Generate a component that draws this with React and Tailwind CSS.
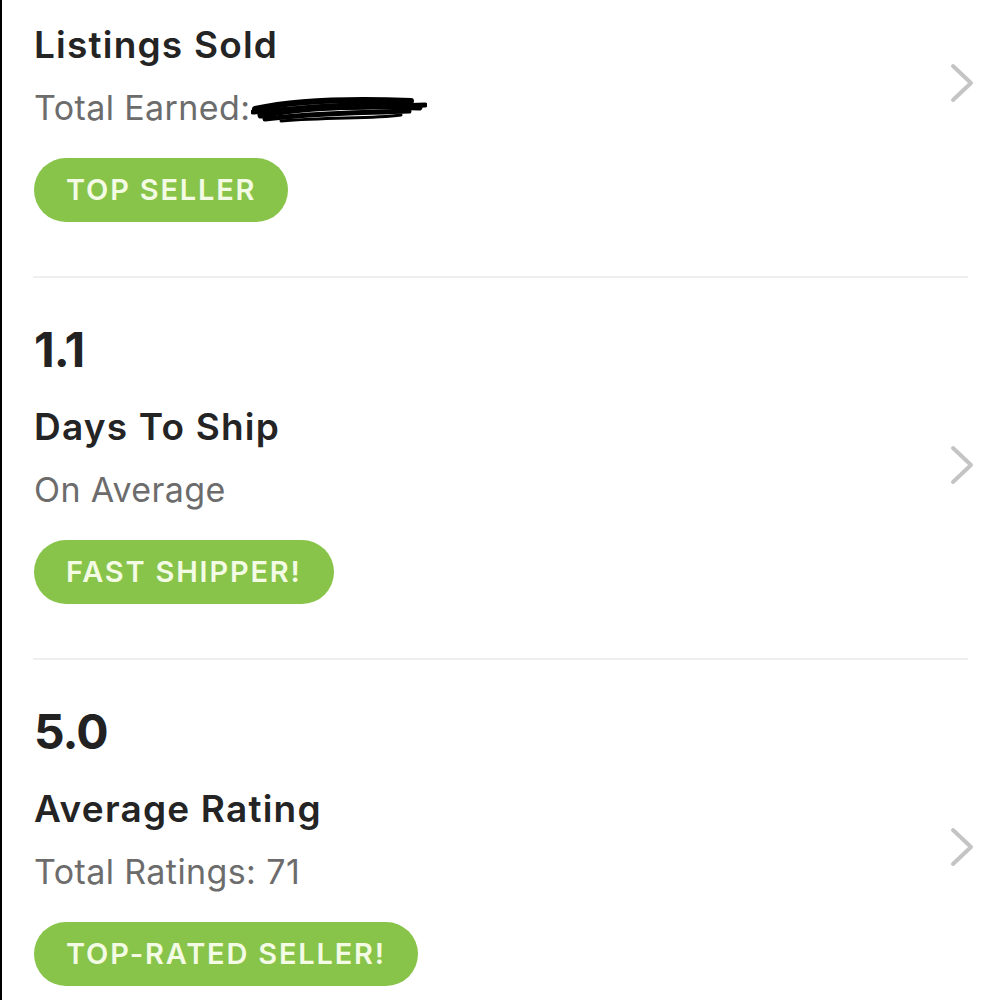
import { useState } from 'react'

const font = { fontFamily: 'Inter, Lato, sans-serif' }

function Chevron() {
  return (
    <svg width="26" height="40" viewBox="0 0 26 40" fill="none" className="shrink-0">
      <polyline points="4,3 22,20 4,37" stroke="#c4c4c4" strokeWidth="4" strokeLinecap="round" strokeLinejoin="round" />
    </svg>
  )
}

function Redacted() {
  return (
    <svg width="176" height="36" viewBox="0 0 176 36" className="ml-[1px] -mb-[4px]">
      <path d="M6 20 C40 10, 90 8, 150 9" stroke="#999" strokeWidth="3" fill="none" />
      <path d="M4 16 C50 6, 110 6, 160 8" stroke="#000" strokeWidth="6" fill="none" strokeLinecap="round" />
      <path d="M10 22 C60 12, 120 12, 168 14" stroke="#000" strokeWidth="7" fill="none" strokeLinecap="round" />
      <path d="M2 19 C40 14, 100 15, 174 12" stroke="#000" strokeWidth="5" fill="none" strokeLinecap="round" />
      <path d="M14 26 C60 20, 110 20, 158 18" stroke="#000" strokeWidth="5" fill="none" strokeLinecap="round" />
      <path d="M30 28 C80 24, 120 26, 150 22" stroke="#000" strokeWidth="3" fill="none" strokeLinecap="round" />
    </svg>
  )
}

export default function App() {
  const [rows] = useState([
    { number: null, title: 'Listings Sold', sub: 'Total Earned:', redact: true, badge: 'TOP SELLER' },
    { number: '1.1', title: 'Days To Ship', sub: 'On Average', badge: 'FAST SHIPPER!' },
    { number: '5.0', title: 'Average Rating', sub: 'Total Ratings: 71', badge: 'TOP-RATED SELLER!' }
  ])

  return (
    <div className="w-[1000px] h-[1000px] overflow-hidden bg-white border-l-2 border-black" style={font}>
      {/* first row starts above the visible area; its number is scrolled out of view */}
      <div className="-mt-[104px]">
        {rows.map((row, idx) => (
          <div key={idx}>
            {idx > 0 && <div className="ml-[31px] mr-[32px] h-[2px] bg-[#efefef]" />}
            <div className="flex items-center pl-[32px] pr-[25px] pt-[48px] pb-[54px]">
              <div className="flex-1 flex flex-col items-start">
                {row.number ? (
                  <div className="text-[48px] leading-[48px] font-bold text-[#222] tracking-[-1px] mb-[34px]">{row.number}</div>
                ) : (
                  <div className="h-[48px] mb-[34px]" />
                )}
                <div className="text-[37px] leading-[37px] font-semibold tracking-[1.2px] text-[#242424]">{row.title}</div>
                <div className="mt-[28px] text-[34px] leading-[34px] tracking-[0.4px] text-[#6c6c6c] flex items-end">
                  <span>{row.sub}</span>
                  {row.redact && <Redacted />}
                </div>
                <div className="mt-[33px] h-[64px] px-[32px] rounded-full bg-[#88c34a] flex items-center">
                  <span className="text-[29px] font-semibold tracking-[1.8px] text-[#f3fbe4]">{row.badge}</span>
                </div>
              </div>
              <Chevron />
            </div>
          </div>
        ))}
      </div>
    </div>
  )
}
